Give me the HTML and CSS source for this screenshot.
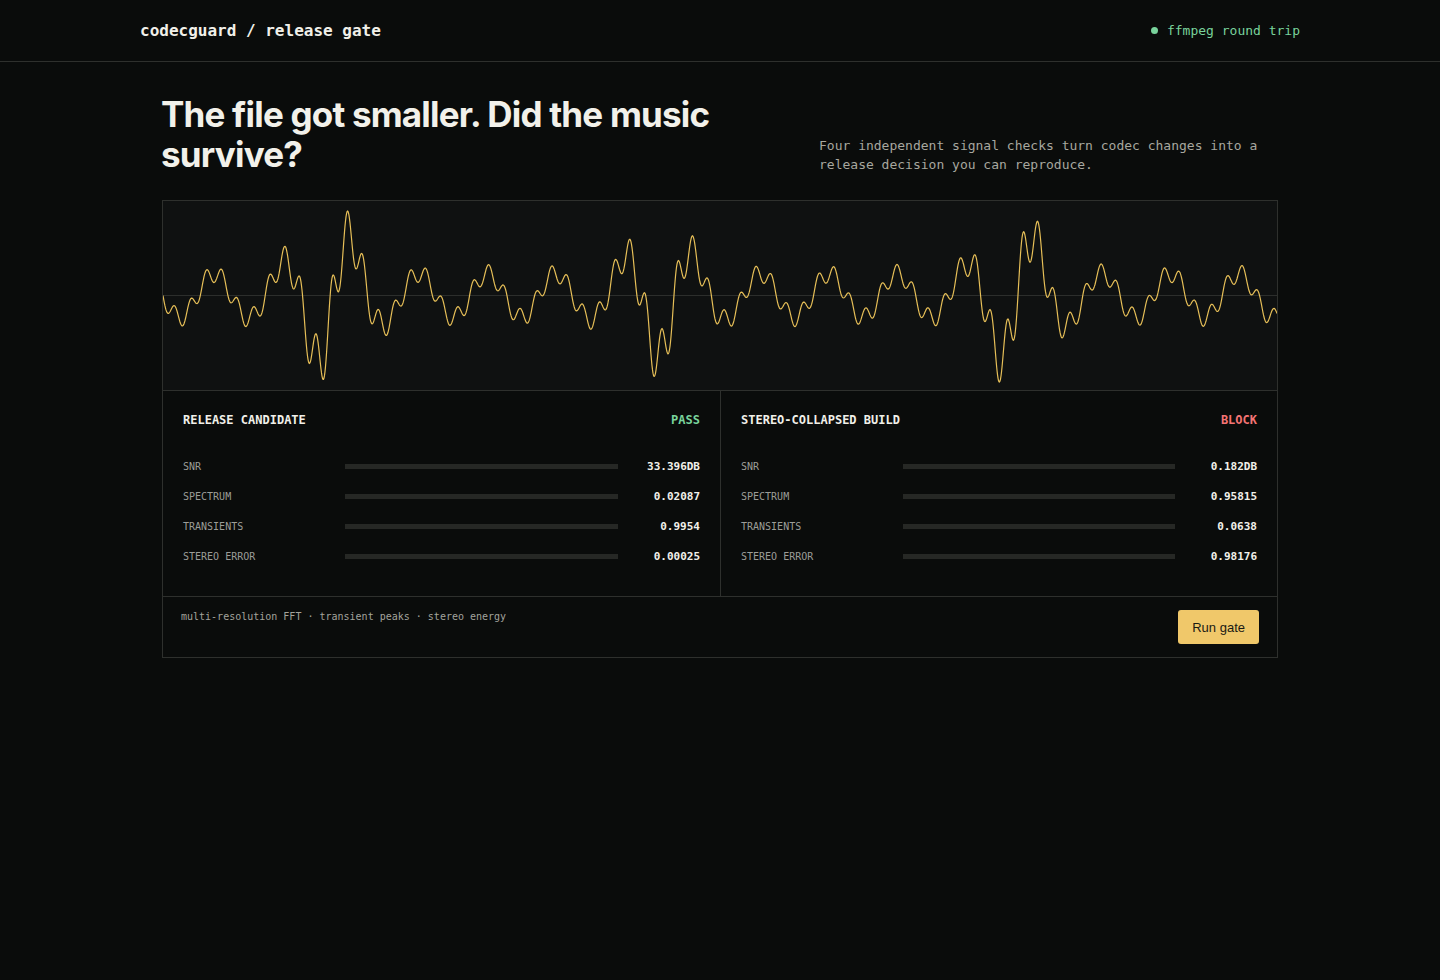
FILE: index.html
```html
<!DOCTYPE html>
<html>
<head>
  <title>codecguard / release gate</title>
  <link rel="stylesheet" href="styles.css">
</head>
<body>
  <header class="topbar">
    <div class="topbar-inner">
      <div class="brand">codecguard / release gate</div>
      <div class="status"><span class="dot"></span>ffmpeg round trip</div>
    </div>
  </header>

  <main class="page">
    <section class="hero">
      <h1>The file got smaller. Did the music survive?</h1>
      <p>Four independent signal checks turn codec changes into a release decision you can reproduce.</p>
    </section>

    <section class="panel">
      <div class="wave">
        <svg viewBox="0 0 1114 189" preserveAspectRatio="none">
          <line x1="0" y1="94.5" x2="1114" y2="94.5" class="axis"></line>
          <path id="wavePath" class="trace" d=""></path>
        </svg>
      </div>

      <div class="builds">
        <div class="build">
          <div class="build-head">
            <span class="build-name">Release candidate</span>
            <span class="verdict pass">Pass</span>
          </div>
          <div class="metrics">
            <div class="metric"><span class="label">SNR</span><span class="track"></span><span class="value">33.396dB</span></div>
            <div class="metric"><span class="label">Spectrum</span><span class="track"></span><span class="value">0.02087</span></div>
            <div class="metric"><span class="label">Transients</span><span class="track"></span><span class="value">0.9954</span></div>
            <div class="metric"><span class="label">Stereo error</span><span class="track"></span><span class="value">0.00025</span></div>
          </div>
        </div>

        <div class="build">
          <div class="build-head">
            <span class="build-name">Stereo-collapsed build</span>
            <span class="verdict block">Block</span>
          </div>
          <div class="metrics">
            <div class="metric"><span class="label">SNR</span><span class="track"></span><span class="value">0.182dB</span></div>
            <div class="metric"><span class="label">Spectrum</span><span class="track"></span><span class="value">0.95815</span></div>
            <div class="metric"><span class="label">Transients</span><span class="track"></span><span class="value">0.0638</span></div>
            <div class="metric"><span class="label">Stereo error</span><span class="track"></span><span class="value">0.98176</span></div>
          </div>
        </div>
      </div>

      <div class="panel-foot">
        <span class="methods">multi-resolution FFT · transient peaks · stereo energy</span>
        <button type="button">Run gate</button>
      </div>
    </section>
  </main>

  <script>
    // synthetic waveform: slow + fast sine, louder around three transients
    var W = 1114, mid = 94.5;
    var bursts = [[167, 2.2], [497, 1.8], [852, 2.1]];

    function env(x) {
      var e = 1;
      for (var i = 0; i < bursts.length; i++) {
        var d = (x - bursts[i][0]) / 40;
        e += bursts[i][1] * Math.exp(-d * d);
      }
      return e;
    }

    var d = '';
    for (var x = 0; x <= W; x += 0.5) {
      var slow = Math.sin(2 * Math.PI * x / 68.3) * 22;
      var fast = Math.sin(2 * Math.PI * x / 15.7) * 9;
      var y = mid + (slow + fast) * env(x);
      d += (x === 0 ? 'M' : 'L') + x.toFixed(1) + ' ' + y.toFixed(2) + ' ';
    }
    document.getElementById('wavePath').setAttribute('d', d);
  </script>
</body>
</html>
```

FILE: styles.css
```css
body {
  margin: 0;
  background: #0a0c0b;
  color: #f1f0e9;
  font-family: "DejaVu Sans Mono", monospace;
}

.topbar {
  height: 61px;
  border-bottom: 1px solid #2e302d;
}

.topbar-inner {
  width: 1160px;
  height: 100%;
  margin: 0 auto;
  display: flex;
  align-items: center;
  justify-content: space-between;
}

.brand {
  font-size: 16px;
  font-weight: bold;
}

.status {
  display: flex;
  align-items: center;
  gap: 9px;
  font-size: 13px;
  color: #79d39c;
}

.dot {
  width: 7px;
  height: 7px;
  border-radius: 50%;
  background: #79d39c;
}

.page {
  width: 1116px;
  margin: 0 auto;
  padding-top: 32px;
}

.hero {
  display: flex;
  align-items: flex-end;
  justify-content: space-between;
  margin-bottom: 26px;
}

.hero h1 {
  max-width: 600px;
  margin: 0 0 0 -1px;
  font-family: Inter, "Noto Sans", sans-serif;
  font-size: 35px;
  font-weight: 700;
  line-height: 40px;
  letter-spacing: -0.8px;
  color: #f2f1ea;
}

.hero p {
  width: 459px;
  margin: 0;
  font-size: 13px;
  line-height: 19px;
  color: #a7a79f;
}

.panel {
  border: 1px solid #2e302d;
}

.wave {
  height: 189px;
  background: #0f1111;
  border-bottom: 1px solid #2e302d;
}

.wave svg {
  display: block;
  width: 100%;
  height: 189px;
}

.axis {
  stroke: #2c2e2c;
  stroke-width: 1;
}

.trace {
  fill: none;
  stroke: #e6bf58;
  stroke-width: 1.2;
}

.builds {
  display: grid;
  grid-template-columns: 1fr 1fr;
  border-bottom: 1px solid #2e302d;
}

.build {
  padding: 20px 20px 25px;
}

.build + .build {
  border-left: 1px solid #2e302d;
}

.build-head {
  display: flex;
  justify-content: space-between;
  line-height: 18px;
  font-size: 12px;
  font-weight: bold;
  text-transform: uppercase;
  margin-bottom: 22px;
}

.verdict.pass {
  color: #79d39c;
}

.verdict.block {
  color: #f47474;
}

.metric {
  display: grid;
  grid-template-columns: 150px 1fr 70px;
  gap: 12px;
  align-items: center;
  height: 30px;
  text-transform: uppercase;
}

.label {
  font-size: 10px;
  color: #9c9d98;
}

.track {
  height: 5px;
  background: #262825;
}

.value {
  text-align: right;
  font-size: 11px;
  font-weight: bold;
}

.panel-foot {
  display: flex;
  justify-content: space-between;
  align-items: flex-start;
  padding: 13px 18px;
}

.methods {
  font-size: 10px;
  line-height: 14px;
  color: #a3a39c;
}

button {
  height: 34px;
  padding: 0 14px;
  border: none;
  border-radius: 3px;
  background: #f0c86a;
  color: #1a1a14;
  font-family: "Liberation Sans", Arial, sans-serif;
  font-size: 13px;
  cursor: pointer;
}
```
